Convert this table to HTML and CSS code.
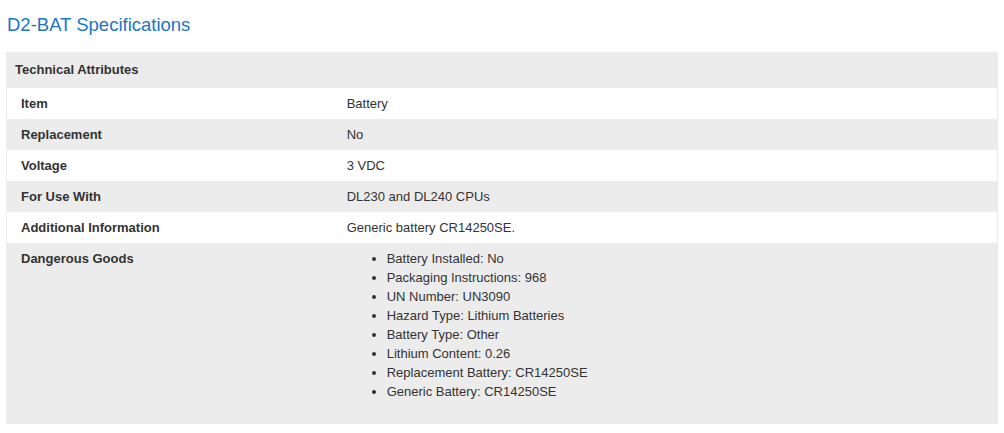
FILE: index.html
```html
<!DOCTYPE html>
<html>
<head>
<meta charset="utf-8">
<link rel="stylesheet" href="styles.css">
</head>
<body>
<h2 class="title">D2-BAT Specifications</h2>
<div class="panel">
  <div class="panel-head">Technical Attributes</div>
  <table class="specs">
    <tr><th>Item</th><td>Battery</td></tr>
    <tr><th>Replacement</th><td>No</td></tr>
    <tr><th>Voltage</th><td>3 VDC</td></tr>
    <tr><th>For Use With</th><td>DL230 and DL240 CPUs</td></tr>
    <tr><th>Additional Information</th><td>Generic battery CR14250SE.</td></tr>
    <tr class="tall"><th>Dangerous Goods</th><td>
      <ul class="dg">
        <li>Battery Installed: No</li>
        <li>Packaging Instructions: 968</li>
        <li>UN Number: UN3090</li>
        <li>Hazard Type: Lithium Batteries</li>
        <li>Battery Type: Other</li>
        <li>Lithium Content: 0.26</li>
        <li>Replacement Battery: CR14250SE</li>
        <li>Generic Battery: CR14250SE</li>
      </ul>
    </td></tr>
  </table>
</div>
</body>
</html>
```
FILE: styles.css
```css
html, body {
  margin: 0;
  padding: 0;
  background: #fff;
}
body {
  padding: 0 6px;
  font-family: "Liberation Sans", Arial, sans-serif;
  color: #333;
}
.title {
  margin: 14px 0 17px 1px;
  font-size: 18.5px;
  font-weight: normal;
  line-height: 21px;
  color: #1a76c5;
}
.panel {
  width: 992px;
  box-sizing: border-box;
  border: 1px solid #ececec;
  border-top: none;
  background: #ececec;
}
.panel-head {
  height: 36px;
  box-sizing: border-box;
  padding: 10px 8px;
  font-size: 13px;
  line-height: 16px;
  font-weight: bold;
  color: #333;
}
.specs {
  width: 100%;
  border-collapse: collapse;
  font-size: 13px;
  line-height: 15px;
}
.specs th, .specs td {
  text-align: left;
  vertical-align: top;
  padding: 8px 14px;
  height: 15px;
}
.specs th {
  width: 33%;
  font-weight: bold;
  color: #333;
}
.specs td {
  padding-left: 13px;
  color: #333;
}
.specs tr:nth-child(odd) {
  background: #fff;
}
.specs tr:nth-child(even) {
  background: #ececec;
}
.specs tr.tall td {
  padding-bottom: 22px;
}
.dg {
  margin: -2px 0 0 0;
  padding-left: 40px;
  line-height: 19px;
}
```
